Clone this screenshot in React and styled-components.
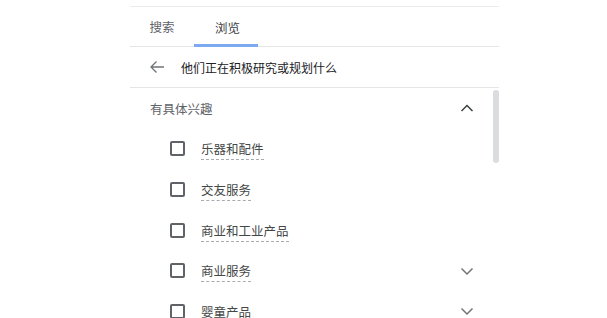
import React from "react";
import styled, { createGlobalStyle } from "styled-components";

const GlobalStyle = createGlobalStyle`
  html, body {
    margin: 0;
    padding: 0;
    background: #ffffff;
    font-family: "Noto Sans CJK SC", "Noto Sans", Roboto, sans-serif;
  }
`;

const Panel = styled.div`
  margin: 6px 0 0 130px;
  width: 369px;
  border-top: 1px solid #ebebeb;
`;

const Tabs = styled.div`
  display: flex;
  height: 39px;
  border-bottom: 1px solid #e6e6e6;
`;

const Tab = styled.div`
  width: 64px;
  display: flex;
  align-items: center;
  justify-content: center;
  font-size: 12.5px;
  color: ${(props) => (props.$active ? "#3c4043" : "#5f6368")};
  box-sizing: border-box;
  padding-top: ${(props) => (props.$active ? "3px" : "0")};
  padding-left: ${(props) => (props.$active ? "3px" : "0")};
  border-bottom: ${(props) => (props.$active ? "3px solid #7baaf0" : "none")};
  margin-bottom: ${(props) => (props.$active ? "-1px" : "0")};
`;

const BackRow = styled.div`
  display: flex;
  align-items: center;
  height: 40px;
  padding-left: 19px;
  gap: 16px;
  border-bottom: 1px solid #e6e6e6;
  font-size: 12px;
  color: #202124;
`;

const Body = styled.div`
  display: flex;
  height: 240px;
`;

const List = styled.div`
  flex: 1;
  display: flex;
  flex-direction: column;
`;

const ScrollTrack = styled.div`
  width: 6px;
  padding-top: 2px;
`;

const ScrollThumb = styled.div`
  height: 73px;
  border-radius: 3px;
  background: #dadce0;
`;

const Row = styled.div`
  display: flex;
  align-items: center;
  height: 40.6px;
  flex-shrink: 0;
  padding-left: ${(props) => props.$indent}px;
  padding-right: 19px;
  font-size: 12.5px;
  color: #5f6368;
`;

const Label = styled.span`
  flex: 1;
  color: ${(props) => (props.$link ? "#444746" : "#5f6368")};
  span {
    border-bottom: ${(props) => (props.$link ? "1px dashed #a8abb0" : "none")};
    padding-bottom: 1px;
  }
`;

const Box = styled.span`
  width: 11px;
  height: 11px;
  border: 2px solid #5f6368;
  border-radius: 2px;
  margin-right: 16px;
  flex-shrink: 0;
`;

const Chevron = ({ up }) => (
  <svg width="14" height="14" viewBox="0 0 14 14" fill="none">
    <path
      d={up ? "M1.5 10 L7 4.5 L12.5 10" : "M1.5 4.5 L7 10 L12.5 4.5"}
      stroke={up ? "#3c4043" : "#6f7378"}
      strokeWidth="1.5"
    />
  </svg>
);

const Arrow = () => (
  <svg width="16" height="16" viewBox="0 0 16 16" fill="none">
    <path d="M15 8 H2 M7.5 2.5 L2 8 L7.5 13.5" stroke="#6f7378" strokeWidth="1.3" />
  </svg>
);

const items = [
  { name: "乐器和配件" },
  { name: "交友服务" },
  { name: "商业和工业产品" },
  { name: "商业服务", more: true },
  { name: "婴童产品", more: true },
];

export default function App() {
  return (
    <>
      <GlobalStyle />
      <Panel>
        <Tabs>
          <Tab>搜索</Tab>
          <Tab $active>浏览</Tab>
        </Tabs>
        <BackRow>
          <Arrow />
          <span>他们正在积极研究或规划什么</span>
        </BackRow>
        <Body>
          <List>
            <Row $indent={20}>
              <Label>有具体兴趣</Label>
              <Chevron up />
            </Row>
            {items.map((it) => (
              <Row $indent={40} key={it.name}>
                <Box />
                <Label $link>
                  <span>{it.name}</span>
                </Label>
                {it.more && <Chevron />}
              </Row>
            ))}
          </List>
          <ScrollTrack>
            <ScrollThumb />
          </ScrollTrack>
        </Body>
      </Panel>
    </>
  );
}
